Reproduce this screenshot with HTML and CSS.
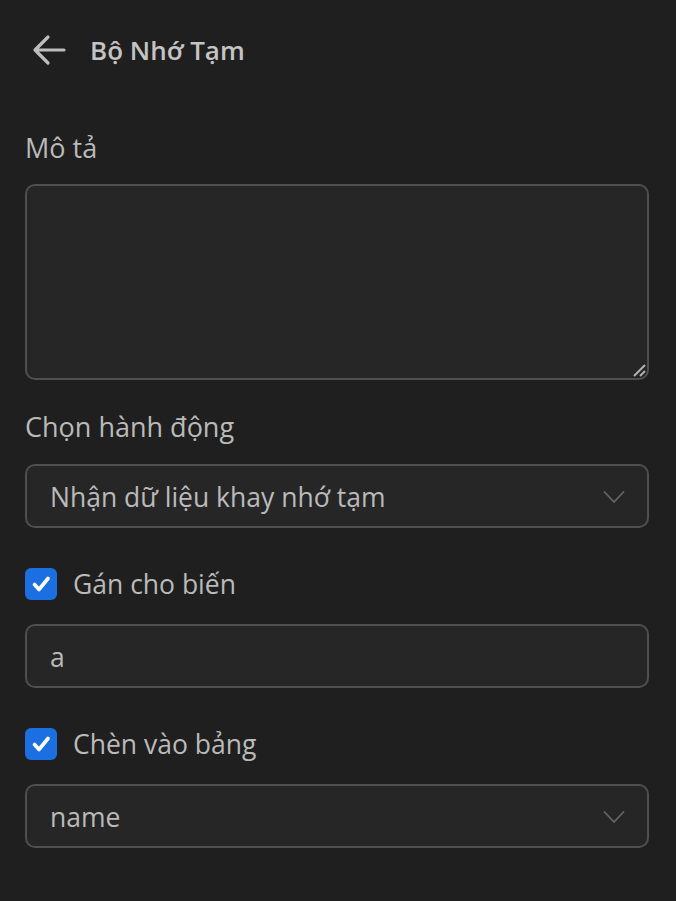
FILE: index.html
```
<!DOCTYPE html>
<html>
<head>
    <meta charset="utf-8">
    <title>Bộ Nhớ Tạm</title>
    <link rel="stylesheet" href="styles.css">
</head>
<body>
    <div class="header">
        <svg class="back" width="34" height="32" viewBox="0 0 34 32">
            <path d="M3 16 H32 M16 3 L3 16 L16 29" fill="none" stroke="#bdbdbd" stroke-width="3.2" stroke-linecap="round" stroke-linejoin="round"/>
        </svg>
        <span class="title">Bộ Nhớ Tạm</span>
    </div>

    <div class="form">
        <label class="label">Mô tả</label>
        <div class="area-wrap">
            <textarea class="area"></textarea>
            <svg class="grip" width="14" height="14" viewBox="0 0 14 14">
                <path d="M2 13 L13 2 M8 13 L13 8" stroke="#b0b0b0" stroke-width="2"/>
            </svg>
        </div>

        <label class="label gap">Chọn hành động</label>
        <div class="select">
            <span>Nhận dữ liệu khay nhớ tạm</span>
            <svg class="chev" width="22" height="14" viewBox="0 0 22 14">
                <path d="M1 1.5 L11 12 L21 1.5" fill="none" stroke="#646464" stroke-width="1.8"/>
            </svg>
        </div>

        <div class="check-row">
            <span class="box">
                <svg width="32" height="32" viewBox="0 0 32 32">
                    <path d="M9.5 16.5 L14 21.5 L23 10.5" fill="none" stroke="#fff" stroke-width="3.6" stroke-linecap="round" stroke-linejoin="round"/>
                </svg>
            </span>
            <span>Gán cho biến</span>
        </div>
        <div class="input">a</div>

        <div class="check-row">
            <span class="box">
                <svg width="32" height="32" viewBox="0 0 32 32">
                    <path d="M9.5 16.5 L14 21.5 L23 10.5" fill="none" stroke="#fff" stroke-width="3.6" stroke-linecap="round" stroke-linejoin="round"/>
                </svg>
            </span>
            <span>Chèn vào bảng</span>
        </div>
        <div class="select">
            <span>name</span>
            <svg class="chev" width="22" height="14" viewBox="0 0 22 14">
                <path d="M1 1.5 L11 12 L21 1.5" fill="none" stroke="#646464" stroke-width="1.8"/>
            </svg>
        </div>
    </div>
</body>
</html>
```

FILE: styles.css
```
html, body {
    margin: 0;
    padding: 0;
}
body {
    background: #1f1f1f;
    color: #bababa;
    font-family: "Open Sans", "Noto Sans", sans-serif;
    width: 676px;
    height: 901px;
    overflow: hidden;
}
.header {
    display: flex;
    align-items: center;
    height: 100px;
    padding: 0 0 0 32px;
}
.back {
    display: block;
    margin-right: 24px;
}
.title {
    font-size: 26px;
    font-weight: 600;
    color: #c4c4c4;
}
.form {
    display: flex;
    flex-direction: column;
    padding: 0 27px 0 25px;
}
.label {
    display: block;
    font-size: 27px;
    line-height: 36px;
    margin: 30px 0 18px 0;
}
.label.gap {
    margin: 29px 0 19px 0;
}
.area-wrap {
    position: relative;
    height: 196px;
}
.area {
    box-sizing: border-box;
    width: 100%;
    height: 196px;
    display: block;
    background: #262626;
    border: 2px solid #4f4f4f;
    border-radius: 10px;
    resize: none;
    outline: none;
}
.grip {
    position: absolute;
    right: 3px;
    bottom: 3px;
}
.select, .input {
    box-sizing: border-box;
    height: 64px;
    display: flex;
    align-items: center;
    justify-content: space-between;
    background: #262626;
    border: 2px solid #4f4f4f;
    border-radius: 10px;
    padding: 2px 22px 0 23px;
    font-size: 26.5px;
    color: #bababa;
}
.chev {
    display: block;
}
.check-row {
    display: flex;
    align-items: center;
    height: 32px;
    margin: 40px 0 24px 0;
    font-size: 26.5px;
}
.box {
    width: 32px;
    height: 32px;
    border-radius: 6px;
    background: #1b6fe0;
    margin-right: 16px;
    display: block;
}
.box svg {
    display: block;
}
```
